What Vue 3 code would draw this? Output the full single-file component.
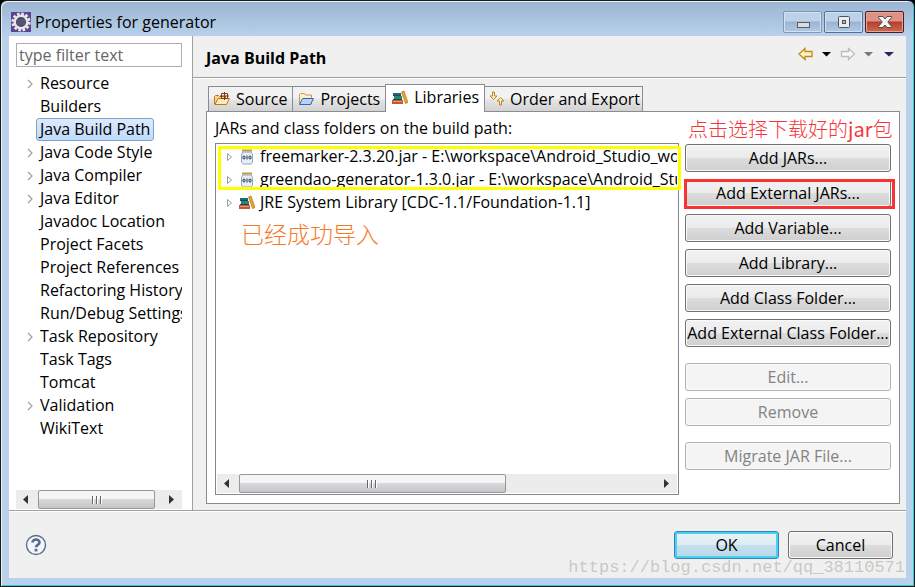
<script setup>
import { ref } from 'vue'

const filter = ref('')
const selected = ref('Java Build Path')
const activeTab = ref('Libraries')

const pages = [
  { name: 'Resource', children: true },
  { name: 'Builders' },
  { name: 'Java Build Path' },
  { name: 'Java Code Style', children: true },
  { name: 'Java Compiler', children: true },
  { name: 'Java Editor', children: true },
  { name: 'Javadoc Location' },
  { name: 'Project Facets' },
  { name: 'Project References' },
  { name: 'Refactoring History' },
  { name: 'Run/Debug Settings' },
  { name: 'Task Repository', children: true },
  { name: 'Task Tags' },
  { name: 'Tomcat' },
  { name: 'Validation', children: true },
  { name: 'WikiText' },
]

const tabs = ['Source', 'Projects', 'Libraries', 'Order and Export']

const jars = [
  'freemarker-2.3.20.jar - E:\\workspace\\Android_Studio_wor',
  'greendao-generator-1.3.0.jar - E:\\workspace\\Android_Stu',
]

const actions = [
  { label: 'Add JARs...' },
  { label: 'Add External JARs...', marked: true },
  { label: 'Add Variable...' },
  { label: 'Add Library...' },
  { label: 'Add Class Folder...' },
  { label: 'Add External Class Folder...' },
  { label: 'Edit...', disabled: true, gap: true },
  { label: 'Remove', disabled: true },
  { label: 'Migrate JAR File...', disabled: true, gap: true },
]
</script>

<template>
  <div class="window">
    <header class="titlebar">
      <svg class="app-icon" width="20" height="20" viewBox="0 0 20 20">
        <rect width="20" height="20" fill="#5a4590" />
        <circle cx="10" cy="10" r="8.300" fill="none" stroke="#ececec" stroke-width="2.600" stroke-dasharray="2.600 1.750" />
        <circle cx="10" cy="10" r="6.300" fill="#4a4668" stroke="#e6e6e6" stroke-width="2.400" />
        <path d="M6 8h8M5.500 10h9M6 12h8" stroke="#66627e" />
      </svg>
      <h1>Properties for generator</h1>
      <div class="win-buttons">
        <button type="button" class="win-btn" aria-label="Minimize">
          <svg width="14" height="14" viewBox="0 0 14 14"><rect x="1.500" y="7.500" width="12" height="5" fill="#dcdcdc" stroke="#555d68" /></svg>
        </button>
        <button type="button" class="win-btn" aria-label="Maximize">
          <svg width="14" height="14" viewBox="0 0 14 14">
            <rect x="1.500" y="1.500" width="11" height="11" rx="1" fill="#ececec" stroke="#4b5563" />
            <rect x="5.500" y="5.500" width="3" height="3" fill="#9db8d8" stroke="#4b5563" />
          </svg>
        </button>
        <button type="button" class="win-btn close" aria-label="Close">
          <svg width="16" height="14" viewBox="0 0 16 14">
            <path d="M1.500 1.500h4.500L8 4l2-2.500h4.500v1L10.800 7l3.700 4.500v1H10L8 10l-2 2.500H1.500v-1L5.200 7 1.500 2.500z" fill="#f4f4f4" stroke="#5a4650" />
          </svg>
        </button>
      </div>
    </header>

    <div class="client">
      <div class="main">
        <aside class="sidebar">
          <input v-model="filter" class="filter" type="text" placeholder="type filter text" aria-label="type filter text" />
          <ul class="pages">
            <li v-for="p in pages" :key="p.name">
              <svg class="chevron" width="8" height="10" viewBox="0 0 8 10">
                <path v-if="p.children" d="M2 1l4 4-4 4" fill="none" stroke="#a0a0a0" stroke-width="1.200" />
              </svg>
              <button type="button" class="page" :class="{ selected: selected === p.name }" @click="selected = p.name">{{ p.name }}</button>
            </li>
          </ul>
          <div class="scrollbar">
            <svg class="arrow" width="22" height="19" viewBox="0 0 22 19"><path d="M12 5v9L7 9.500z" fill="#333" /></svg>
            <div class="thumb side-thumb"><i></i><i></i><i></i></div>
            <span class="track side-track"></span>
            <svg class="arrow" width="22" height="19" viewBox="0 0 22 19"><path d="M9 5v9l5-4.500z" fill="#333" /></svg>
          </div>
        </aside>

        <section class="content">
          <div class="heading">
            <h2>Java Build Path</h2>
            <svg class="nav" width="98" height="14" viewBox="0 0 98 14">
              <path d="M1 7l6-5.500v3h7v5H7v3z" fill="#fff3c4" stroke="#c08a1c" stroke-width="1.300" />
              <path d="M24 5h9l-4.500 4.500z" fill="#000" />
              <path d="M56.500 7l-6-5.500v3h-7v5h7v3z" fill="#f8f8f4" stroke="#bcbcb8" stroke-width="1.300" />
              <path d="M66 5h9l-4.500 4.500z" fill="#777780" />
              <path d="M86 5h10l-5 4.500z" fill="#2b2560" />
            </svg>
          </div>

          <div class="tabs" role="tablist">
            <button v-for="t in tabs" :key="t" type="button" role="tab" class="tab" :class="{ active: activeTab === t }" :aria-selected="activeTab === t" @click="activeTab = t">
              <svg v-if="t === 'Source'" width="16" height="16" viewBox="0 0 16 16">
                <path d="M.500 13V5.500l1-1h3l1 1h6V13z" fill="#f7d58b" stroke="#b9792a" />
                <path d="M1 13.500l3-6h11.500l-3 6z" fill="#fdebb5" stroke="#b9792a" />
                <path d="M7.500 2.500h6v5h-6zM10.500 1v8M6 5h9" fill="none" stroke="#7a3d1e" />
              </svg>
              <svg v-else-if="t === 'Projects'" width="16" height="16" viewBox="0 0 16 16">
                <path d="M1.500 13V3.500l1-1h4l1 1.500h6V13z" fill="#fdf0c8" stroke="#c59a4a" />
                <path d="M1.500 13.500l3-6h11l-3 6z" fill="#b5d2fa" stroke="#3c62b5" />
              </svg>
              <svg v-else-if="t === 'Libraries'" width="16" height="16" viewBox="0 0 16 16">
                <path d="M1 3h8v2H1z" fill="#17706f" /><path d="M2 6h8v3H2z" fill="#1f8a6c" /><path d="M1 5h8v1H1zM1 9h9v1H1z" fill="#263f6a" />
                <path d="M0 10h11v4H0z" fill="#c5572c" /><path d="M1 11.500h9" stroke="#e89a70" /><path d="M9.500 2l2.500-1 4 11.500-2.500 1z" fill="#f0a51f" stroke="#a8610f" stroke-width=".6" />
              </svg>
              <svg v-else width="16" height="16" viewBox="0 0 16 16">
                <path d="M3.500 1h2v4h2.500L4.500 8.500 1 5h2.500z" fill="#fff0b8" stroke="#b98624" />
                <path d="M10.500 14h2v-4H15l-3.500-3.500L8 10h2.500z" fill="#fff0b8" stroke="#b98624" />
              </svg>
              <span>{{ t }}</span>
            </button>
          </div>

          <div class="panel">
            <div class="left">
              <p class="caption">JARs and class folders on the build path:</p>
              <div class="list">
                <ul class="entries">
                  <li v-for="jar in jars" :key="jar">
                    <svg class="twisty" width="7" height="10" viewBox="0 0 7 10"><path d="M1.500 1.500v7L5.500 5z" fill="#fff" stroke="#999" /></svg>
                    <svg class="entry-icon" width="16" height="16" viewBox="0 0 16 16">
                      <path d="M3 1.500h10" stroke="#c99a30" stroke-width="2" />
                      <path d="M3.500 3h9c0 1.500 1 1.500 1 3v7c0 1-1 2-2 2h-7c-1 0-2-1-2-2V6c0-1.500 1-1.500 1-3z" fill="#e6eff9" stroke="#8fa6c4" />
                      <rect x="4" y="7" width="2" height="3" rx="1" fill="#fff" stroke="#26324a" />
                      <path d="M8 6.500v4" stroke="#26324a" />
                      <rect x="10" y="7" width="2" height="3" rx="1" fill="#fff" stroke="#26324a" />
                    </svg>
                    <span>{{ jar }}</span>
                  </li>
                  <li>
                    <svg class="twisty" width="7" height="10" viewBox="0 0 7 10"><path d="M1.500 1.500v7L5.500 5z" fill="#fff" stroke="#999" /></svg>
                    <svg class="entry-icon" width="16" height="16" viewBox="0 0 16 16">
                      <path d="M1 3h8v2H1z" fill="#17706f" /><path d="M2 6h8v3H2z" fill="#1f8a6c" /><path d="M1 5h8v1H1zM1 9h9v1H1z" fill="#263f6a" />
                      <path d="M0 10h11v4H0z" fill="#c5572c" /><path d="M1 11.500h9" stroke="#e89a70" /><path d="M9.500 2l2.500-1 4 11.500-2.500 1z" fill="#f0a51f" stroke="#a8610f" stroke-width=".6" />
                    </svg>
                    <span>JRE System Library [CDC-1.1/Foundation-1.1]</span>
                  </li>
                </ul>
                <p class="note orange">已经成功导入</p>
                <div class="scrollbar list-scroll">
                  <svg class="arrow" width="22" height="19" viewBox="0 0 22 19"><path d="M12 5v9L7 9.500z" fill="#333" /></svg>
                  <div class="thumb list-thumb"><i></i><i></i><i></i></div>
                  <span class="track list-track"></span>
                  <svg class="arrow" width="22" height="19" viewBox="0 0 22 19"><path d="M9 5v9l5-4.500z" fill="#333" /></svg>
                </div>
                <div class="yellow-box"></div>
              </div>
            </div>

            <div class="actions">
              <p class="note red">点击选择下载好的<b>jar</b>包</p>
              <button v-for="a in actions" :key="a.label" type="button" class="btn" :class="{ marked: a.marked, gap: a.gap }" :disabled="a.disabled">{{ a.label }}</button>
            </div>
          </div>
        </section>
      </div>

      <footer class="footer">
        <button type="button" class="help" aria-label="Help">
          <svg width="22" height="22" viewBox="0 0 22 22">
            <circle cx="11" cy="11" r="9.500" fill="#f4f6fa" stroke="#5b6f93" stroke-width="1.400" />
            <path d="M7.500 8.500C7.500 4.500 14.500 4.500 14.500 8.500C14.500 11 11 10.800 11 13.300" fill="none" stroke="#56698f" stroke-width="2.600" />
            <rect x="9.600" y="14.800" width="2.800" height="2.600" fill="#56698f" />
          </svg>
        </button>
        <button type="button" class="btn dialog-btn ok">OK</button>
        <button type="button" class="btn dialog-btn">Cancel</button>
        <span class="watermark">https://blog.csdn.net/qq_38110571</span>
      </footer>
    </div>
  </div>
</template>

<style>
body { background: #000; }
</style>

<style scoped>
* { box-sizing: border-box; }
.window {
  min-height: 100vh;
  display: flex;
  flex-direction: column;
  padding: 0 7px 8px;
  border: 1px solid #1b1b1b;
  border-radius: 7px 7px 0 0;
  box-shadow: inset 1px 1px 0 #e8f2fc, inset -1px -1px 0 #35c8e0;
  background: linear-gradient(#9ab5d3, #b9d1ea 36px, #b9d1ea);
  font: 16px/23px "Open Sans", "Noto Sans CJK SC", sans-serif;
  color: #000;
}
h1, h2, p, ul { margin: 0; padding: 0; }
ul { list-style: none; }
button, input { font: inherit; color: inherit; margin: 0; }

.titlebar {
  flex: none;
  display: flex;
  align-items: center;
  height: 35px;
  padding: 7px 3px 0;
}
.titlebar h1 { flex: 1; margin-left: 4px; font-size: 16px; font-weight: 400; }
.win-buttons { display: flex; gap: 2px; align-self: flex-start; padding-top: 3px; }
.win-btn {
  display: flex;
  align-items: center;
  justify-content: center;
  width: 39px;
  height: 22px;
  padding: 0;
  border: 1px solid #56718f;
  border-radius: 2px;
  box-shadow: inset 0 0 0 1px #d3e2f2;
  background: linear-gradient(#bdd1e8 45%, #9ab5d4 50%, #b0c9e4);
}
.win-btn:first-child { border-color: #8099b5; }
.win-btn.close {
  border-color: #501c20;
  box-shadow: inset 0 0 0 1px #e5a597;
  background: linear-gradient(#dd9284 45%, #b63e2c 50%, #cd6b50);
}

.client {
  flex: 1;
  display: flex;
  flex-direction: column;
  margin: 0 1px;
  background: #f0f0f0;
}
.main { flex: 1; display: flex; min-width: 0; border-bottom: 1px solid #a0a0a0; }

.sidebar {
  flex: none;
  display: flex;
  flex-direction: column;
  width: 184px;
  padding: 7px 10px 1px 7px;
  border-right: 1px solid #a0a0a0;
  background: #fff;
}
.filter {
  width: 100%;
  height: 24px;
  padding: 0 2px;
  border: 1px solid #abadb3;
  background: #fff;
  outline: none;
}
.filter::placeholder { color: #666; opacity: 1; }
.pages { flex: 1; padding-top: 5px; }
.pages li { display: flex; align-items: center; height: 23px; overflow: hidden; }
.chevron { flex: none; margin: 0 2px 0 10px; }
.page {
  flex: none;
  height: 23px;
  padding: 0 3px;
  border: 1px solid transparent;
  border-radius: 3px;
  background: none;
  line-height: 21px;
  white-space: nowrap;
}
.page.selected {
  border-color: #7da2ce;
  background: linear-gradient(#dcebfc, #c1dbfc);
}

.scrollbar { flex: none; display: flex; height: 19px; background: #ececec; }
.arrow { flex: none; }
.thumb {
  display: flex;
  align-items: center;
  justify-content: center;
  gap: 2px;
  border: 1px solid #979797;
  border-radius: 2px;
  background: linear-gradient(#f5f5f5 45%, #d8d8da 50%, #c6c6c8);
}
.thumb i { width: 2px; height: 8px; border-left: 1px solid #666; background: #fff; }
.side-thumb { flex: 117; }
.side-track { flex: 5; }
.list-thumb { flex: 266; }
.list-track { flex: 150; }

.content { flex: 1; min-width: 0; display: flex; flex-direction: column; padding-bottom: 6px; }
.heading {
  flex: none;
  display: flex;
  justify-content: space-between;
  align-items: flex-start;
  height: 42px;
  padding: 11px 10px 0 13px;
  border-bottom: 1px solid #a0a0a0;
  box-shadow: 0 1px 0 #fff;
}
.heading h2 { font-size: 16px; font-weight: 700; }

.tabs { flex: none; display: flex; align-items: flex-end; padding: 6px 0 0 15px; }
.tab {
  display: flex;
  align-items: center;
  gap: 6px;
  height: 25px;
  padding: 0 5px;
  border: 1px solid #898c95;
  border-right-width: 0;
  border-bottom: 0;
  background: linear-gradient(#f2f2f2 45%, #e4e4e4 55%, #d2d2d2);
  white-space: nowrap;
}
.tab:last-child { border-right-width: 1px; padding: 0 2px 0 4px; gap: 5px; }
.tab.active {
  position: relative;
  z-index: 1;
  height: 28px;
  margin-bottom: -1px;
  padding: 0 5px 2px 6px;
  border-right-width: 1px;
  background: #fff;
}
.tab.active + .tab { border-left-width: 0; }

.panel {
  flex: 1;
  display: flex;
  gap: 6px;
  margin: 0 6px 0 13px;
  padding: 5px 8px 8px;
  border: 1px solid #898c95;
  background: #fff;
}
.left { flex: 1; min-width: 0; display: flex; flex-direction: column; }
.caption { height: 26px; }
.list {
  position: relative;
  flex: 1;
  display: flex;
  flex-direction: column;
  border: 1px solid #828790;
  padding: 1px;
}
.entries { overflow: hidden; }
.entries li { display: flex; align-items: center; height: 23px; white-space: nowrap; }
.twisty { flex: none; margin-left: 9px; }
.entry-icon { flex: none; margin: 0 5px 0 6px; }
.yellow-box {
  position: absolute;
  inset: 2px -3px auto 2px;
  height: 44px;
  border: 3px solid #ff0;
}
.note { font-family: "Noto Sans CJK SC", sans-serif; font-weight: 300; }
.orange { padding: 2px 0 0 24px; font-size: 23px; line-height: 34px; color: #f57a28; }
.list-scroll { margin-top: auto; }

.actions { flex: none; width: 206px; display: flex; flex-direction: column; gap: 7px; }
.red {
  height: 20px;
  padding-left: 3px;
  font-size: 20px;
  line-height: 24px;
  color: #f5363b;
  white-space: nowrap;
}
.btn {
  height: 28px;
  padding: 0;
  border: 1px solid #707070;
  border-radius: 3px;
  box-shadow: inset 0 0 0 1px #fafafa;
  background: linear-gradient(#f2f2f2, #ebebeb 50%, #dddddd 50%, #cfcfcf);
  line-height: 26px;
  white-space: nowrap;
}
.btn:disabled { border-color: #adb2b5; background: #f4f4f4; color: #838383; }
.btn.gap { margin-top: 9px; }
.btn.marked { position: relative; }
.btn.marked::after {
  content: '';
  position: absolute;
  inset: -1px -5px -3px -2px;
  border: 3px solid #fa3232;
}

.footer {
  position: relative;
  flex: none;
  display: flex;
  align-items: center;
  gap: 9px;
  height: 67px;
  padding: 0 13px 0 16px;
  border-top: 1px solid #fff;
}
.help { display: flex; margin-right: auto; padding: 0; border: 0; background: none; }
.dialog-btn { width: 105px; }
.ok {
  border-color: #3c7fb1;
  box-shadow: inset 0 0 0 2px #48d0f5;
  background: linear-gradient(#eaf3f8, #dcecf4 50%, #c6e0ec 50%, #b8d8e8);
}
.watermark {
  position: absolute;
  right: 1px;
  bottom: 0;
  font: 17px/20px "Liberation Mono", monospace;
  color: rgba(150, 150, 140, 0.45);
  pointer-events: none;
}
</style>
